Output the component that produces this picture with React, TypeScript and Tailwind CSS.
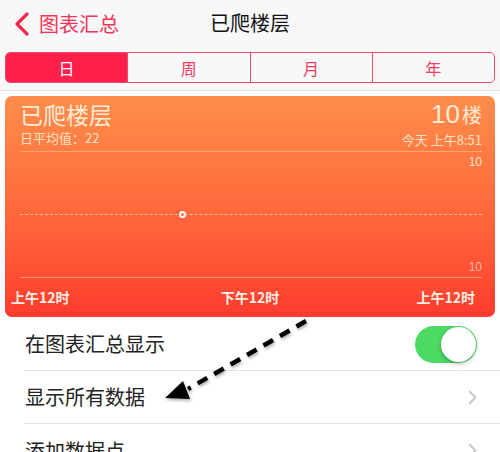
import React from "react";

const FONT = { fontFamily: '"Noto Sans CJK SC", "Noto Sans", sans-serif' };

function Segment({ label, active, last }: { label: string; active?: boolean; last?: boolean }) {
  return (
    <div
      className={
        "flex-1 flex items-center justify-center text-[16px] leading-none " +
        (active ? "bg-[#ff1f4b] text-white" : "text-[#ec3c63]") +
        (last ? "" : " border-r-[1.5px] border-[#ec4a6c]")
      }
    >
      {label}
    </div>
  );
}

export default function App() {
  return (
    <div className="relative w-[500px] h-[452px] overflow-hidden bg-white" style={FONT}>
      {/* header */}
      <div className="h-[91px] bg-[#f8f8f8] border-b border-[#dedede] flex flex-col">
        <div className="h-[46px] flex items-center relative">
          <div className="flex items-center pl-[13px] gap-[8px] pt-[1px]">
            <svg width="18" height="24" viewBox="0 0 18 24">
              <path d="M14 2 L4 12 L14 22" fill="none" stroke="#f2284e" strokeWidth="3.2" strokeLinecap="round" strokeLinejoin="round" />
            </svg>
            <span className="text-[20px] leading-none text-[#f2345a]">图表汇总</span>
          </div>
          <div className="flex-1" />
          <span className="absolute left-1/2 -translate-x-1/2 text-[20px] leading-none text-[#111]">已爬楼层</span>
        </div>
        <div className="px-[5px] pt-[6px]">
          <div className="h-[31px] flex rounded-[5px] border-[1.5px] border-[#ec4a6c] overflow-hidden">
            <Segment label="日" active />
            <Segment label="周" />
            <Segment label="月" />
            <Segment label="年" last />
          </div>
        </div>
      </div>

      {/* card */}
      <div className="px-[5px] pt-[5px]">
        <div className="h-[221px] rounded-[7px] bg-gradient-to-b from-[#ff8d4c] via-[#ff6a3c] to-[#ff3a2e] flex flex-col">
          <div className="pl-[15px] pr-[13px] pt-[4px] flex justify-between text-[#ffecd6]">
            <div className="flex flex-col">
              <span className="text-[23px] leading-[28px]">已爬楼层</span>
              <span className="text-[13px] leading-[16px] mt-[2px] text-[#ffe2c4]">日平均值：22</span>
            </div>
            <div className="flex flex-col items-end">
              <span className="leading-[28px]">
                <span className="text-[26px]" style={{ fontFamily: '"Liberation Sans", sans-serif' }}>10</span>
                <span className="text-[20px] ml-[2px]">楼</span>
              </span>
              <span className="text-[13px] leading-[16px] mt-[2px] text-[#ffe2c4]">今天 上午8:51</span>
            </div>
          </div>
          <div className="ml-[15px] mr-[13px] mt-[3px] h-[127px] border-t border-b border-[#ffc48f]/60 flex flex-col">
            <div className="text-right text-[12px] leading-[14px] pt-[3px] text-[#ffe6cf]" style={{ fontFamily: '"Liberation Sans", sans-serif' }}>10</div>
            <div className="flex-1 flex items-center">
              <div className="relative w-full border-t border-dashed border-[#ffd7b3]/80">
                <div className="absolute left-[159px] top-[-4px] w-[7px] h-[7px] rounded-full bg-[#ff6f3e] border-2 border-white" />
              </div>
            </div>
            <div className="text-right text-[12px] leading-[14px] pb-[3px] text-[#ffb9a0]" style={{ fontFamily: '"Liberation Sans", sans-serif' }}>10</div>
          </div>
          <div className="flex-1 flex items-center pl-[6px] pr-[20px] text-[14px] font-semibold text-[#ffece2]">
            <span>上午12时</span>
            <span className="flex-1 text-center pl-[14px]">下午12时</span>
            <span>上午12时</span>
          </div>
        </div>
      </div>

      {/* list */}
      <div className="pl-[24px] mt-[1px]">
        <div className="h-[53px] flex items-center justify-between border-b border-[#e2e2e2] pr-[23px]">
          <span className="text-[20px] text-[#222] pl-[1px]">在图表汇总显示</span>
          <div className="w-[62px] h-[37px] rounded-full bg-[#4cd964] flex items-center justify-end pr-[1px]">
            <div className="w-[35px] h-[35px] rounded-full bg-white shadow-[0_2px_4px_rgba(0,0,0,0.25)]" />
          </div>
        </div>
        <div className="h-[53px] flex items-center justify-between border-b border-[#e2e2e2] pr-[23px]">
          <span className="text-[20px] text-[#222] pl-[1px]">显示所有数据</span>
          <svg width="9" height="15" viewBox="0 0 9 15">
            <path d="M1.5 1.5 L7.5 7.5 L1.5 13.5" fill="none" stroke="#c7c7cc" strokeWidth="1.8" strokeLinecap="round" strokeLinejoin="round" />
          </svg>
        </div>
        <div className="h-[53px] flex items-center justify-between pr-[23px]">
          <span className="text-[20px] text-[#222] pl-[1px]">添加数据点</span>
          <svg width="9" height="15" viewBox="0 0 9 15">
            <path d="M1.5 1.5 L7.5 7.5 L1.5 13.5" fill="none" stroke="#c7c7cc" strokeWidth="1.8" strokeLinecap="round" strokeLinejoin="round" />
          </svg>
        </div>
      </div>

      {/* annotation arrow */}
      <svg className="absolute left-0 top-0 pointer-events-none" width="500" height="452" viewBox="0 0 500 452">
        <defs>
          <filter id="sh" x="-20%" y="-20%" width="140%" height="140%">
            <feDropShadow dx="1" dy="2" stdDeviation="1.5" floodColor="#000" floodOpacity="0.3" />
          </filter>
        </defs>
        <g filter="url(#sh)">
          <line x1="306" y1="321" x2="188" y2="389" stroke="#000" strokeWidth="4.5" strokeDasharray="11 8" />
          <polygon points="165,398 183,381 190,399" fill="#000" />
        </g>
      </svg>
    </div>
  );
}
